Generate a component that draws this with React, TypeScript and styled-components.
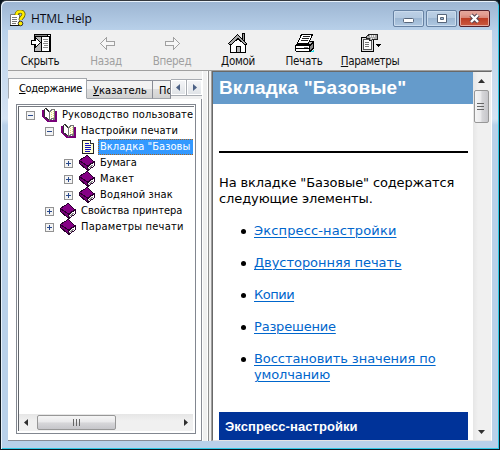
import React from "react";
import styled, { createGlobalStyle } from "styled-components";

const Global = createGlobalStyle`
  * { box-sizing: border-box; }
  html, body { margin: 0; padding: 0; background: #06131c; }
  body { width: 500px; height: 450px; overflow: hidden; }
`;

const ui = `"DejaVu Sans Condensed", "DejaVu Sans", sans-serif`;

const Window = styled.div`
  width: 500px;
  height: 450px;
  display: flex;
  flex-direction: column;
  padding: 1px 7px 8px 7px;
  border: 1px solid #111a22;
  border-top-color: #34383e;
  border-radius: 6px 6px 0 0;
  background: linear-gradient(#9cb5d2, #b9d1ea 30px, #c3d7ec 50px, #d2e1f2 110px, #d4e3f3 118px, #b9d1ea 124px);
  box-shadow: inset 1px 1px 0 #e8f2fb, inset -1px -1px 0 #2fc9e6;
  overflow: hidden;
`;

const TitleBar = styled.header`
  height: 28px;
  flex: none;
  display: flex;
  align-items: center;
  padding: 5px 2px 0 1px;
`;

const Title = styled.h1`
  margin: 0 auto 0 5px;
  font: 12px/16px "Open Sans", sans-serif;
  letter-spacing: -0.1px;
  color: #0a0a14;
`;

const Controls = styled.div`
  display: flex;
  gap: 2px;
  margin-top: -1px;
`;

const ControlButton = styled.button<{ $danger?: boolean }>`
  width: 31px;
  height: 17px;
  padding: 0;
  display: flex;
  align-items: center;
  justify-content: center;
  border: 1px solid ${(p) => (p.$danger ? "#54202a" : "#6782a3")};
  border-radius: 2px;
  box-shadow: inset 0 0 0 1px ${(p) => (p.$danger ? "#e4a79d" : "#cbdcee")};
  background: ${(p) =>
    p.$danger
      ? "linear-gradient(#e3a095 0 20%, #d98577 46%, #bd3d25 50%, #ca5a40)"
      : "linear-gradient(#bdd0e6, #b3c9e0 46%, #9db7d3 50%, #afc8e1)"};
`;

const Client = styled.main`
  flex: 1;
  min-height: 0;
  display: flex;
  flex-direction: column;
  background: #f0f0f0;
`;

const Toolbar = styled.nav`
  height: 41px;
  flex: none;
  display: flex;
  border-bottom: 1px solid #a0a0a0;
`;

const ToolButton = styled.button<{ $off?: boolean }>`
  width: 66px;
  height: 40px;
  padding: 3px 0 0;
  border: 0;
  background: none;
  display: flex;
  flex-direction: column;
  align-items: center;
  flex: none;
  color: ${(p) => (p.$off ? "#a0a0a0" : "#101010")};
  &:first-child { margin-left: -1px; }
`;

const ToolLabel = styled.span<{ $ls?: number }>`
  font: 11.5px/14px ${ui};
  letter-spacing: ${(p) => p.$ls ?? -0.3}px;
  white-space: nowrap;
  margin-top: 1px;
`;

const Panes = styled.div`
  flex: 1;
  min-height: 0;
  display: flex;
`;

const Navigation = styled.section`
  width: 194px;
  flex: none;
  display: flex;
  flex-direction: column;
  padding-top: 7px;
`;

const TabStrip = styled.div`
  height: 21px;
  flex: none;
  display: flex;
  align-items: flex-end;
`;

const Tab = styled.div<{ $w: number; $active?: boolean; $ls?: number }>`
  width: ${(p) => p.$w}px;
  height: ${(p) => (p.$active ? 21 : 19)}px;
  padding: ${(p) => (p.$active ? "3px 0 0 10px" : "3px 0 0 6px")};
  flex: none;
  font: 11px/14px ${ui};
  letter-spacing: ${(p) => p.$ls ?? 0}px;
  color: #000;
  white-space: nowrap;
  overflow: hidden;
  border: 1px solid ${(p) => (p.$active ? "#a4a8ad" : "#898c95")};
  border-left-width: ${(p) => (p.$active ? 1 : 0)}px;
  border-bottom-color: ${(p) => (p.$active ? "#fff" : "#a0a4aa")};
  background: ${(p) => (p.$active ? "#fff" : "linear-gradient(#f2f2f2 45%, #dedede 50%, #d2d2d2)")};
`;

const TabSpinner = styled.div`
  display: flex;
  flex: none;
  height: 17px;
  margin-top: 1px;
  align-self: flex-start;
`;

const SpinButton = styled.button`
  width: 16px;
  height: 17px;
  padding: 0;
  display: flex;
  align-items: center;
  justify-content: center;
  border: 1px solid #a8acb2;
  border-left-width: 0;
  background: linear-gradient(#f5f6f8, #dfe2e6);
  box-shadow: inset 0 0 0 1px #fff;
`;

const TabPage = styled.div`
  flex: 1;
  min-height: 0;
  padding: 5px 5px 6px 8px;
  background: #fff;
  border-right: 1px solid #898c95;
  border-bottom: 1px solid #898c95;
`;

const TreeBox = styled.div`
  height: 100%;
  border: 1px solid #828790;
  padding: 1px 1px 2px;
`;

const TreeInner = styled.div`
  height: 100%;
  border-left: 1px solid #62666c;
  border-top: 1px solid #777b82;
  display: flex;
  flex-direction: column;
`;

const TreeList = styled.div`
  flex: 1;
  min-height: 0;
  width: 174px;
  overflow: hidden;
`;

const TreeRow = styled.div<{ $level: number; $leaf?: boolean }>`
  height: 16px;
  padding-left: ${(p) => 7 + p.$level * 19 + (p.$leaf ? 9 : 0)}px;
  display: flex;
  align-items: center;
`;

const TreeText = styled.span<{ $selected?: boolean; $ls?: number }>`
  flex: ${(p) => (p.$selected ? "1 0 auto" : "none")};
  height: 16px;
  padding-left: 2px;
  font: 11px/15px ${ui};
  letter-spacing: ${(p) => p.$ls ?? 0}px;
  white-space: nowrap;
  color: ${(p) => (p.$selected ? "#fff" : "#000")};
  background: ${(p) => (p.$selected ? "#3399ff" : "transparent")};
  border: 0 dotted #a86420;
  ${(p) => p.$selected && "border-width: 1px 0 1px 1px; padding-left: 1px; line-height: 14px;"}
`;

const HScroll = styled.div`
  height: 17px;
  width: 174px;
  padding: 0 4px;
  flex: none;
  display: flex;
  align-items: center;
  background: linear-gradient(#e6e6e6, #f0f0f0 40%);
`;

const HThumb = styled.div`
  width: 79px;
  height: 15px;
  margin: 0 auto 0 7px;
  border: 1px solid #979797;
  border-radius: 2px;
  display: flex;
  justify-content: center;
  align-items: center;
  background: linear-gradient(#f5f5f5, #e9e9eb 47%, #d7d7da 52%, #c6c6ca);
`;

const Splitter = styled.div`
  width: 10px;
  flex: none;
  border-right: 1px solid #a0a0a0;
  background: linear-gradient(90deg, #fff 0 1px, #f0f0f0 1px 5px, #fff 5px 6px, #909090 6px 7px, #f0f0f0 7px);
`;

const Viewer = styled.section`
  flex: 1;
  min-width: 0;
  display: flex;
  border-left: 1px solid #696969;
  border-top: 1px solid #696969;
  border-right: 1px solid #fff;
  border-bottom: 1px solid #e3e3e3;
`;

const Article = styled.article`
  width: 260px;
  flex: none;
  overflow: hidden;
  background: #fff;
  font: 13px/16px "DejaVu Sans", sans-serif;
  color: #000;
`;

const PageTitle = styled.h2`
  height: 32px;
  margin: 0;
  padding: 0 0 0 6px;
  font: bold 19px/32px "Liberation Sans", Arial, sans-serif;
  letter-spacing: 0.14px;
  white-space: nowrap;
  color: #fff;
  background: #659bcb;
`;

const Rule = styled.hr`
  height: 2px;
  margin: 47px 5px 0 6px;
  border: 0;
  background: #000;
`;

const Line = styled.span<{ $ls?: number }>`
  display: block;
  white-space: nowrap;
  letter-spacing: ${(p) => p.$ls ?? 0}px;
`;

const Intro = styled.p`
  margin: 22px 0 0 6px;
`;

const Links = styled.ul`
  margin: 16px 0 0;
  padding: 0 0 0 27px;
  list-style: none;
`;

const LinkItem = styled.li`
  display: flex;
  margin-bottom: 16px;
  &::before {
    content: "";
    width: 5px;
    height: 5px;
    flex: none;
    margin: 6px 8px 0 1px;
    border-radius: 50%;
    background: #000;
  }
`;

const Anchor = styled.a`
  color: #0066cc;
  text-decoration: underline;
  text-underline-offset: 2px;
  text-decoration-thickness: 1px;
`;

const SectionTitle = styled.h3`
  height: 40px;
  margin: 29px 5px 0 6px;
  padding-left: 6px;
  font: bold 13px/29px "Liberation Sans", Arial, sans-serif;
  letter-spacing: 0.06px;
  color: #fff;
  background: #003399;
`;

const VScroll = styled.div`
  width: 17px;
  flex: none;
  display: flex;
  flex-direction: column;
  align-items: center;
  padding: 6px 1px 5px 0;
  background: linear-gradient(90deg, #e6e6e6, #f0f0f0 30%);
`;

const VThumb = styled.div`
  width: 15px;
  height: 33px;
  margin: 5px 0 auto;
  border: 1px solid #979797;
  border-radius: 2px;
  display: flex;
  justify-content: center;
  align-items: center;
  background: linear-gradient(90deg, #f5f5f5, #e9e9eb 47%, #d7d7da 52%, #c6c6ca);
`;

const Drawing = styled.svg`
  display: block;
  flex: none;
`;

type ArrowProps = { dir: "left" | "right" | "up" | "down"; color?: string };
const arrowPaths = {
  left: "M5 0v7L1 3.5z",
  right: "M2 0v7l4-3.5z",
  up: "M0 5h7L3.5 1z",
  down: "M0 2h7L3.5 6z",
};
const Arrow = ({ dir, color = "#303030" }: ArrowProps) => (
  <Drawing width="7" height="7">
    <path d={arrowPaths[dir]} fill={color} />
  </Drawing>
);

const HelpIcon = () => (
  <Drawing width="17" height="17" viewBox="0 0 17 17">
    <path d="M1.5 4.5h9v10l-2 1h-7z" fill="#fff" stroke="#777" />
    <path d="M1 15.5h10" stroke="#111" />
    <path d="M3 7.5h5M3 9.5h5M3 11.5h5M3 13.5h4" stroke="#777" />
    <path d="M7.5 5C7.5 .5 15 .5 14.500 4.500C14.500 7 11.500 7.500 11.500 10" fill="none" stroke="#5c5a00" strokeWidth="4" />
    <path d="M7.500 5C7.500 .5 15 .5 14.500 4.500C14.500 7 11.500 7.500 11.500 10" fill="none" stroke="#ffed00" strokeWidth="2.500" />
    <circle cx="11.500" cy="13.500" r="2.300" fill="#ffed00" stroke="#333" />
  </Drawing>
);

const HideIcon = () => (
  <Drawing width="21" height="20" viewBox="0 0 21 20" shapeRendering="crispEdges">
    <path d="M4 1h17v18H4z" fill="#000" />
    <path d="M5 4h6v14H5z" fill="#b8b8b8" />
    <path d="M12 4h7v14h-7z" fill="#fff" />
    <path d="M5 2h12v1H5z" fill="#888" />
    <path d="M18 2h2v1h-2z" fill="#fff" />
    <path d="M13 6.500h5M14 8.500h4M13 10.500h5M14 12.500h4M13 14.500h5" stroke="#888" />
    <path d="M1.500 7.500h4v-3l5 5-5 5v-3h-4z" fill="#fff" stroke="#000" />
  </Drawing>
);

const NavArrow = ({ back }: { back?: boolean }) => (
  <Drawing width="18" height="20" viewBox="0 0 18 20" shapeRendering="crispEdges">
    <path
      d={back ? "M17.500 8.500h-8v-4l-6 6 6 6v-4h8z" : "M2.500 8.500h8v-4l6 6-6 6v-4h-8z"}
      fill="#f6f6f6"
      stroke="#a0a0a0"
    />
  </Drawing>
);

const HomeIcon = () => (
  <Drawing width="20" height="20" viewBox="0 0 20 20" shapeRendering="crispEdges">
    <path d="M14.500 6V.500h2V9" fill="#999" stroke="#000" />
    <path d="M2.500 11v8h15v-8L10 4z" fill="#fff" stroke="#000" />
    <path d="M.500 10.500L9.500 1.500 19 11l-2 1-7-6.500L3 12z" fill="#a8a8a8" stroke="#000" />
    <path d="M8.500 19v-6h4v6" fill="#b8b8b8" stroke="#000" />
  </Drawing>
);

const PrintIcon = () => (
  <Drawing width="21" height="20" viewBox="0 0 21 20" shapeRendering="crispEdges">
    <path d="M1 12l4-4h14l1 1v6l-4 4H2l-1-1z" fill="#000" />
    <path d="M2 13h13v2H2zM2 16h13v2H2z" fill="#fff" />
    <path d="M4 11l2-2h12l-2 2z" fill="#bbb" />
    <path d="M16 17v-4l3-3v4z" fill="#888" />
    <path d="M7.500 1.500h11l-4 9h-11z" fill="#fff" stroke="#000" />
    <path d="M9 3.500h7M8 5.500h7M7 7.500h7" stroke="#222" />
    <path d="M10 14.500h4" stroke="#777" />
    <path d="M17 18h2v-1" stroke="#20dce8" fill="none" />
  </Drawing>
);

const OptionsIcon = () => (
  <Drawing width="22" height="20" viewBox="0 0 22 20" shapeRendering="crispEdges">
    <path d="M2.500 4.500h12v14h-12z" fill="#ddd" stroke="#000" />
    <path d="M4.500 6.500h8v10h-8z" fill="#fff" stroke="#555" />
    <path d="M6 9.500h4M6 11.500h4M6 13.500h4" stroke="#777" />
    <path d="M7 4l4-3h7v5h-4l-2 2-2-1 1-2H7z" fill="#aaa" stroke="#222" />
    <path d="M11 3.500h6M12 5.500h4M11 2.500h5" stroke="#eee" strokeDasharray="1 1" />
    <path d="M17 11h5v1h-1v1h-1v1h-1v-1h-1v-1h-1z" fill="#000" />
  </Drawing>
);

const OpenBook = () => (
  <Drawing width="17" height="16" viewBox="0 0 17 16" shapeRendering="crispEdges">
    <path d="M1 3h2v7l5 3h6V4h2v11H7L1 10z" fill="#780078" />
    <path d="M3.500 2.500L5 1.500l3.500 3.500v8L3.500 9.500z" fill="#fff" stroke="#333" />
    <path d="M8.500 13v-8l2.500-2.500h2.500v10l-2-1z" fill="#fffff0" stroke="#777" />
    <path d="M10.500 5v6M12.500 4v7" stroke="#e5dc70" strokeDasharray="1 1" />
  </Drawing>
);

const ClosedBook = () => (
  <Drawing width="17" height="16" viewBox="0 0 17 16" shapeRendering="crispEdges">
    <path d="M0 5L8 0l7 6h1v5L9 16 0 9z" fill="#28002d" />
    <path d="M1 5.500l7-4.500 6 5.500L8.500 10.500z" fill="#850085" />
    <path d="M1 6.500L8 11.500v2.500L1 8.500z" fill="#760076" />
    <path d="M9 12L15 7.500v3l-6 4z" fill="#fff" />
    <path d="M9.500 13.500l5-4" stroke="#888" />
  </Drawing>
);

const PageIcon = () => (
  <Drawing width="17" height="16" viewBox="0 0 17 16" shapeRendering="crispEdges">
    <path d="M3.500 1.500h8l3 3v10h-11z" fill="#ffffd2" stroke="#222" />
    <path d="M11.500 1.500v3h3" fill="#fff" stroke="#333" />
    <path d="M6 4.500h4M6 6.500h6M6 8.500h6M6 10.500h6M6 12.500h5" stroke="#1010c0" />
  </Drawing>
);

const Expander = ({ open }: { open?: boolean }) => (
  <Drawing width="9" height="9" shapeRendering="crispEdges">
    <path d="M.500.500h8v8h-8z" fill="#f4f4f4" stroke="#929292" />
    <path d={open ? "M2 4.500h5" : "M2 4.500h5M4.500 2v5"} stroke="#294a8d" />
  </Drawing>
);

const IconSlot = styled.span`
  margin: 0 2px 0 6px;
  flex: none;
`;

type Node = { text: string; level: number; kind: "open" | "closed" | "page"; ls?: number };
const nodes: Node[] = [
  { text: "Руководство пользовате", level: 0, kind: "open", ls: 0.12 },
  { text: "Настройки печати", level: 1, kind: "open", ls: 0.08 },
  { text: "Вкладка \"Базовы", level: 2, kind: "page", ls: 0.05 },
  { text: "Бумага", level: 2, kind: "closed", ls: -0.1 },
  { text: "Макет", level: 2, kind: "closed", ls: 0.4 },
  { text: "Водяной знак", level: 2, kind: "closed", ls: 0.1 },
  { text: "Свойства принтера", level: 1, kind: "closed" },
  { text: "Параметры печати", level: 1, kind: "closed", ls: 0.22 },
];

type LinkLine = { text: string; ls: number };
const links: LinkLine[][] = [
  [{ text: "Экспресс-настройки", ls: 0.14 }],
  [{ text: "Двусторонняя печать", ls: -0.05 }],
  [{ text: "Копии", ls: -0.5 }],
  [{ text: "Разрешение", ls: -0.2 }],
  [{ text: "Восстановить значения по", ls: -0.06 }, { text: "умолчанию", ls: -0.15 }],
];

export default function App() {
  return (
    <>
      <Global />
      <Window>
        <TitleBar>
          <HelpIcon />
          <Title>HTML Help</Title>
          <Controls>
            <ControlButton aria-label="Свернуть">
              <Drawing width="13" height="11"><rect x="1.500" y="5.500" width="10" height="4" rx="1" fill="#fff" stroke="#56657a" /></Drawing>
            </ControlButton>
            <ControlButton aria-label="Развернуть">
              <Drawing width="12" height="11"><path d="M1.500 1.500h9v8h-9zM4.500 4.500v2h3v-2z" fill="#fff" fillRule="evenodd" stroke="#56657a" /></Drawing>
            </ControlButton>
            <ControlButton $danger aria-label="Закрыть">
              <Drawing width="13" height="11"><path d="M3 2l7 7M10 2L3 9" stroke="#5a4550" strokeWidth="4.400" /><path d="M3 2l7 7M10 2L3 9" stroke="#fff" strokeWidth="2.400" /></Drawing>
            </ControlButton>
          </Controls>
        </TitleBar>
        <Client>
          <Toolbar>
            <ToolButton><HideIcon /><ToolLabel>Скрыть</ToolLabel></ToolButton>
            <ToolButton $off><NavArrow back /><ToolLabel>Назад</ToolLabel></ToolButton>
            <ToolButton $off><NavArrow /><ToolLabel>Вперед</ToolLabel></ToolButton>
            <ToolButton><HomeIcon /><ToolLabel>Домой</ToolLabel></ToolButton>
            <ToolButton><PrintIcon /><ToolLabel>Печать</ToolLabel></ToolButton>
            <ToolButton><OptionsIcon /><ToolLabel $ls={-0.4}><u>П</u>араметры</ToolLabel></ToolButton>
          </Toolbar>
          <Panes>
            <Navigation>
              <TabStrip>
                <Tab $w={79} $active $ls={-0.32}><u>С</u>одержание</Tab>
                <Tab $w={66} $ls={0.05}><u>У</u>казатель</Tab>
                <Tab $w={18}>По</Tab>
                <TabSpinner>
                  <SpinButton><Arrow dir="left" color="#4b6085" /></SpinButton>
                  <SpinButton><Arrow dir="right" color="#4b6085" /></SpinButton>
                </TabSpinner>
              </TabStrip>
              <TabPage>
                <TreeBox>
                  <TreeInner>
                    <TreeList>
                      {nodes.map((n) => (
                        <TreeRow key={n.text} $level={n.level} $leaf={n.kind === "page"}>
                          {n.kind !== "page" && <Expander open={n.kind === "open"} />}
                          <IconSlot>
                            {n.kind === "open" ? <OpenBook /> : n.kind === "closed" ? <ClosedBook /> : <PageIcon />}
                          </IconSlot>
                          <TreeText $selected={n.kind === "page"} $ls={n.ls}>{n.text}</TreeText>
                        </TreeRow>
                      ))}
                    </TreeList>
                    <HScroll>
                      <Arrow dir="left" />
                      <HThumb><Drawing width="9" height="8"><path d="M1.500 0v7M4.500 0v7M7.500 0v7" stroke="#666" /></Drawing></HThumb>
                      <Arrow dir="right" />
                    </HScroll>
                  </TreeInner>
                </TreeBox>
              </TabPage>
            </Navigation>
            <Splitter />
            <Viewer>
              <Article>
                <PageTitle>Вкладка "Базовые"</PageTitle>
                <Rule />
                <Intro>
                  <Line $ls={-0.12}>На вкладке "Базовые" содержатся</Line>
                  <Line $ls={-0.1}>следующие элементы.</Line>
                </Intro>
                <Links>
                  {links.map((lines) => (
                    <LinkItem key={lines[0].text}>
                      <Anchor>{lines.map((l) => <Line key={l.text} $ls={l.ls}>{l.text}</Line>)}</Anchor>
                    </LinkItem>
                  ))}
                </Links>
                <SectionTitle>Экспресс-настройки</SectionTitle>
              </Article>
              <VScroll>
                <Arrow dir="up" />
                <VThumb><Drawing width="8" height="9"><path d="M0 1.500h7M0 4.500h7M0 7.500h7" stroke="#666" /></Drawing></VThumb>
                <Arrow dir="down" />
              </VScroll>
            </Viewer>
          </Panes>
        </Client>
      </Window>
    </>
  );
}
